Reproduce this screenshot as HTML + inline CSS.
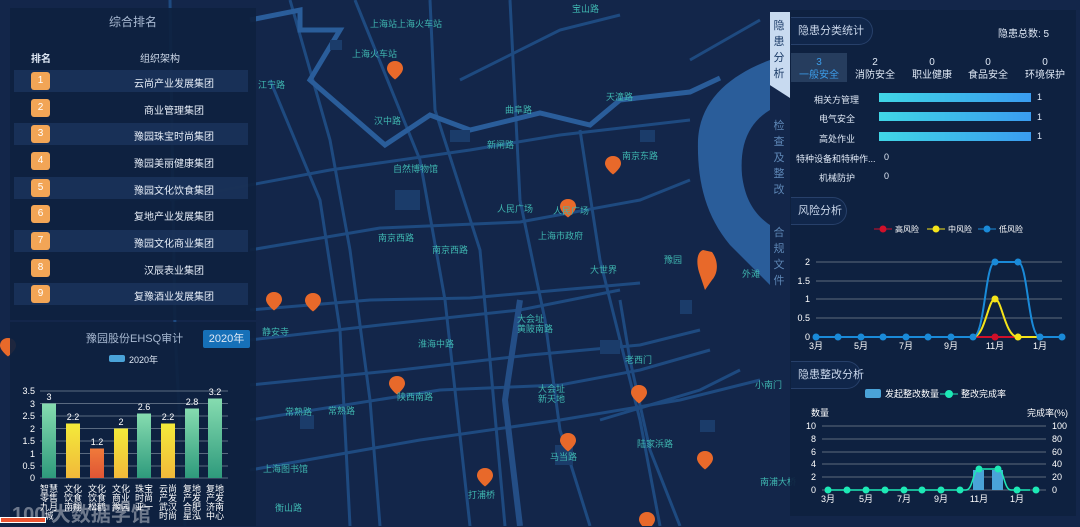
<!DOCTYPE html>
<html><head><meta charset="utf-8"><style>
*{margin:0;padding:0;box-sizing:border-box}
body{width:1080px;height:526px;overflow:hidden;background:#13264a;font-family:"Liberation Sans","Noto Sans CJK SC",sans-serif;color:#dfe8f5;position:relative}
.abs{position:absolute}
.ml{position:absolute;font-size:9px;color:#3fb6b0;white-space:nowrap}
.panel{position:absolute;background:rgba(14,33,64,0.93)}
.row{position:absolute;left:14px;width:234px;height:22px;font-size:10px}
.row.o{background:rgba(28,52,92,0.8)}
.bd{position:absolute;left:17px;top:2px;width:19px;height:18px;background:#f2a556;border-radius:3px;color:#fff;text-align:center;line-height:18px;font-size:10px}
.rt{position:absolute;left:90px;width:140px;text-align:center;top:5px;color:#e6edf7}
.tab{position:absolute;left:768px;width:22px;font-size:11px;text-align:center;line-height:16px;color:#5d86b5}
.hd{position:absolute;height:28px;border:1px solid #27406a;border-left:none;border-radius:0 14px 14px 0;font-size:11px;line-height:26px;padding-left:7px;color:#c9d6ea;background:#10264a;white-space:nowrap}
</style></head><body>
<svg class="abs" style="left:0;top:0" width="1080" height="526">
<g fill="none" stroke="#1e4a80" stroke-width="3">
<path d="M170 0 L175 330 L185 526"/>
<path d="M355 0 L420 160 L445 300 L470 526"/>
<path d="M430 0 L435 110 L480 250 L490 360 L505 526"/>
<path d="M170 200 L330 170 L470 150 L560 135 L690 120"/>
<path d="M250 250 L380 228 L520 222 L640 200 L690 180"/>
<path d="M250 310 L370 300 L470 298 L560 290 L640 283"/>
<path d="M250 340 L380 325 L520 310 L620 290"/>
<path d="M250 385 L400 370 L530 355 L640 345 L700 330"/>
<path d="M250 420 L440 390 L560 385 L640 370 L710 350"/>
<path d="M250 470 L420 440 L560 420 L680 400 L760 380"/>
<path d="M290 0 L330 140 L350 250 L370 400 L380 526"/>
<path d="M510 0 L520 200 L545 320 L560 430 L590 526"/>
<path d="M580 130 L600 260 L640 420 L660 526"/>
<path d="M270 80 L320 200 L340 330 L350 526"/>
<path d="M620 300 L630 360 L650 450 L680 526"/>
<path d="M460 80 L560 30 L620 15"/>
<path d="M690 60 L760 20"/>
<path d="M600 420 L700 390 L740 370"/>
</g>
<path d="M250 20 L300 10 L300 30 L340 30 L310 80 L385 145 L430 115 L470 130 L540 113 L590 125 L620 100 L690 92 L720 78" fill="none" stroke="#2a5d9a" stroke-width="5"/>
<path d="M520 300 L505 400 L520 526" fill="none" stroke="#244e86" stroke-width="6"/>
<path d="M770 60 C730 75 700 100 698 140 C697 180 705 215 730 245 L770 285 Z" fill="#2a5d9a"/>
<path d="M770 110 C745 125 740 150 742 175 C745 200 755 215 770 225 Z" fill="#13264a"/>
<g fill="#1b3c6a">
<rect x="330" y="40" width="12" height="10"/><rect x="450" y="130" width="20" height="12"/><rect x="395" y="190" width="25" height="20"/><rect x="640" y="130" width="15" height="12"/><rect x="680" y="300" width="12" height="14"/><rect x="600" y="340" width="20" height="14"/><rect x="700" y="420" width="15" height="12"/><rect x="555" y="445" width="18" height="20"/><rect x="300" y="415" width="14" height="14"/>
</g>
<g fill="#e8692a">
<path transform="translate(395,61)" d="M0 0c-5 0-8 3.5-8 7.5c0 5 8 11 8 11s8-6 8-11c0-4-3-7.5-8-7.5z"/>
<path transform="translate(613,156)" d="M0 0c-5 0-8 3.5-8 7.5c0 5 8 11 8 11s8-6 8-11c0-4-3-7.5-8-7.5z"/>
<path transform="translate(568,199)" d="M0 0c-5 0-8 3.5-8 7.5c0 5 8 11 8 11s8-6 8-11c0-4-3-7.5-8-7.5z"/>
<path transform="translate(274,292)" d="M0 0c-5 0-8 3.5-8 7.5c0 5 8 11 8 11s8-6 8-11c0-4-3-7.5-8-7.5z"/>
<path transform="translate(313,293)" d="M0 0c-5 0-8 3.5-8 7.5c0 5 8 11 8 11s8-6 8-11c0-4-3-7.5-8-7.5z"/>
<path transform="translate(397,376)" d="M0 0c-5 0-8 3.5-8 7.5c0 5 8 11 8 11s8-6 8-11c0-4-3-7.5-8-7.5z"/>
<path transform="translate(639,385)" d="M0 0c-5 0-8 3.5-8 7.5c0 5 8 11 8 11s8-6 8-11c0-4-3-7.5-8-7.5z"/>
<path transform="translate(568,433)" d="M0 0c-5 0-8 3.5-8 7.5c0 5 8 11 8 11s8-6 8-11c0-4-3-7.5-8-7.5z"/>
<path transform="translate(705,451)" d="M0 0c-5 0-8 3.5-8 7.5c0 5 8 11 8 11s8-6 8-11c0-4-3-7.5-8-7.5z"/>
<path transform="translate(485,468)" d="M0 0c-5 0-8 3.5-8 7.5c0 5 8 11 8 11s8-6 8-11c0-4-3-7.5-8-7.5z"/>
<path transform="translate(647,512)" d="M0 0c-5 0-8 3.5-8 7.5c0 5 8 11 8 11s8-6 8-11c0-4-3-7.5-8-7.5z"/>
<path transform="translate(8,338)" d="M0 0c-5 0-8 3.5-8 7.5c0 5 8 11 8 11s8-6 8-11c0-4-3-7.5-8-7.5z"/>
<path d="M703 250 C697 252 696 262 699 272 L705 290 L712 280 C719 272 718 260 712 252Z"/>
</g>
</svg>
<div class="ml" style="left:370px;top:17px">上海站上海火车站</div>
<div class="ml" style="left:352px;top:47px">上海火车站</div>
<div class="ml" style="left:374px;top:114px">汉中路</div>
<div class="ml" style="left:505px;top:103px">曲阜路</div>
<div class="ml" style="left:606px;top:90px">天潼路</div>
<div class="ml" style="left:487px;top:138px">新闸路</div>
<div class="ml" style="left:393px;top:162px">自然博物馆</div>
<div class="ml" style="left:622px;top:149px">南京东路</div>
<div class="ml" style="left:497px;top:202px">人民广场</div>
<div class="ml" style="left:553px;top:204px">人民广场</div>
<div class="ml" style="left:538px;top:229px">上海市政府</div>
<div class="ml" style="left:378px;top:231px">南京西路</div>
<div class="ml" style="left:432px;top:243px">南京西路</div>
<div class="ml" style="left:590px;top:263px">大世界</div>
<div class="ml" style="left:664px;top:253px">豫园</div>
<div class="ml" style="left:742px;top:267px">外滩</div>
<div class="ml" style="left:262px;top:325px">静安寺</div>
<div class="ml" style="left:418px;top:337px">淮海中路</div>
<div class="ml" style="left:517px;top:314px;line-height:10px">大会址<br>黄陂南路</div>
<div class="ml" style="left:625px;top:353px">老西门</div>
<div class="ml" style="left:397px;top:390px">陕西南路</div>
<div class="ml" style="left:538px;top:384px;line-height:10px">大会址<br>新天地</div>
<div class="ml" style="left:285px;top:405px">常熟路</div>
<div class="ml" style="left:328px;top:404px">常熟路</div>
<div class="ml" style="left:637px;top:437px">陆家浜路</div>
<div class="ml" style="left:550px;top:450px">马当路</div>
<div class="ml" style="left:263px;top:462px">上海图书馆</div>
<div class="ml" style="left:468px;top:488px">打浦桥</div>
<div class="ml" style="left:275px;top:501px">衡山路</div>
<div class="ml" style="left:572px;top:2px">宝山路</div>
<div class="ml" style="left:258px;top:78px">江宁路</div>
<div class="ml" style="left:755px;top:378px">小南门</div>
<div class="ml" style="left:760px;top:475px">南浦大桥</div>

<div class="panel" style="left:10px;top:8px;width:246px;height:312px"></div>
<div class="abs" style="left:10px;top:13px;width:246px;text-align:center;font-size:12px;color:#a9bad2">综合排名</div>
<div class="abs" style="left:31px;top:50px;font-size:10px;font-weight:bold">排名</div>
<div class="abs" style="left:140px;top:50px;font-size:10px;color:#d0dbeb">组织架构</div>
<div class="row o" style="top:70px"><div class="bd">1</div><div class="rt">云尚产业发展集团</div></div>
<div class="row" style="top:97px"><div class="bd">2</div><div class="rt">商业管理集团</div></div>
<div class="row o" style="top:123px"><div class="bd">3</div><div class="rt">豫园珠宝时尚集团</div></div>
<div class="row" style="top:150px"><div class="bd">4</div><div class="rt">豫园美丽健康集团</div></div>
<div class="row o" style="top:177px"><div class="bd">5</div><div class="rt">豫园文化饮食集团</div></div>
<div class="row" style="top:203px"><div class="bd">6</div><div class="rt">复地产业发展集团</div></div>
<div class="row o" style="top:230px"><div class="bd">7</div><div class="rt">豫园文化商业集团</div></div>
<div class="row" style="top:257px"><div class="bd">8</div><div class="rt">汉辰表业集团</div></div>
<div class="row o" style="top:283px"><div class="bd">9</div><div class="rt">复豫酒业发展集团</div></div>

<div class="panel" style="left:10px;top:322px;width:246px;height:204px"></div>
<div class="abs" style="left:86px;top:330px;font-size:11px;color:#a9bad2">豫园股份EHSQ审计</div>
<div class="abs" style="left:203px;top:330px;width:47px;height:18px;background:#1670b8;border-radius:2px;font-size:11px;text-align:center;line-height:18px">2020年</div>
<div class="abs" style="left:109px;top:355px;width:16px;height:7px;background:#4aa3d8;border-radius:2px"></div>
<div class="abs" style="left:129px;top:353px;font-size:9px">2020年</div>
<svg class="abs" style="left:0;top:380px" width="256" height="146">
<defs>
<linearGradient id="g" x1="0" y1="0" x2="0" y2="1"><stop offset="0" stop-color="#86dcb0"/><stop offset="1" stop-color="#2e9a7c"/></linearGradient>
<linearGradient id="y" x1="0" y1="0" x2="0" y2="1"><stop offset="0" stop-color="#f3ea3a"/><stop offset="1" stop-color="#f2b93a"/></linearGradient>
<linearGradient id="r" x1="0" y1="0" x2="0" y2="1"><stop offset="0" stop-color="#f07a3a"/><stop offset="1" stop-color="#e05535"/></linearGradient>
</defs>
<g stroke="#5a6a80" stroke-width="1">
<line x1="40" y1="11" x2="228" y2="11"/><line x1="40" y1="23.5" x2="228" y2="23.5"/><line x1="40" y1="36" x2="228" y2="36"/><line x1="40" y1="48.5" x2="228" y2="48.5"/><line x1="40" y1="61" x2="228" y2="61"/><line x1="40" y1="73.5" x2="228" y2="73.5"/><line x1="40" y1="86" x2="228" y2="86"/><line x1="40" y1="98" x2="228" y2="98"/>
</g>
<g font-size="9" fill="#fff" text-anchor="end">
<text x="35" y="14">3.5</text><text x="35" y="27">3</text><text x="35" y="39">2.5</text><text x="35" y="52">2</text><text x="35" y="64">1.5</text><text x="35" y="77">1</text><text x="35" y="89">0.5</text><text x="35" y="101">0</text>
</g>
<rect x="42" y="23.5" width="14" height="74.5" fill="url(#g)"/>
<rect x="66" y="43.5" width="14" height="54.5" fill="url(#y)"/>
<rect x="90" y="68.5" width="14" height="29.5" fill="url(#r)"/>
<rect x="114" y="48.5" width="14" height="49.5" fill="url(#y)"/>
<rect x="137" y="33.5" width="14" height="64.5" fill="url(#g)"/>
<rect x="161" y="43.5" width="14" height="54.5" fill="url(#y)"/>
<rect x="185" y="28.5" width="14" height="69.5" fill="url(#g)"/>
<rect x="208" y="18.5" width="14" height="79.5" fill="url(#g)"/>
<g font-size="9" fill="#fff" text-anchor="middle">
<text x="49" y="20">3</text><text x="73" y="40">2.2</text><text x="97" y="65">1.2</text><text x="121" y="45">2</text><text x="144" y="30">2.6</text><text x="168" y="40">2.2</text><text x="192" y="25">2.8</text><text x="215" y="15">3.2</text>
</g>
<g font-size="9" fill="#fff" text-anchor="middle">
<text x="49" y="112">智慧</text><text x="49" y="121">零售</text><text x="49" y="130">九月</text><text x="49" y="139">城</text>
<text x="73" y="112">文化</text><text x="73" y="121">饮食</text><text x="73" y="130">南翔</text>
<text x="97" y="112">文化</text><text x="97" y="121">饮食</text><text x="97" y="130">松鹤</text>
<text x="121" y="112">文化</text><text x="121" y="121">商业</text><text x="121" y="130">豫园</text>
<text x="144" y="112">珠宝</text><text x="144" y="121">时尚</text><text x="144" y="130">亚一</text>
<text x="168" y="112">云尚</text><text x="168" y="121">产发</text><text x="168" y="130">武汉</text><text x="168" y="139">时尚</text>
<text x="192" y="112">复地</text><text x="192" y="121">产发</text><text x="192" y="130">合肥</text><text x="192" y="139">星泓</text>
<text x="215" y="112">复地</text><text x="215" y="121">产发</text><text x="215" y="130">济南</text><text x="215" y="139">中心</text>
</g>
</svg>
<div class="abs" style="left:12px;top:498px;font-size:20px;color:rgba(255,255,255,0.4);font-weight:bold">100 大数据学馆</div>
<div class="abs" style="left:0;top:517px;width:46px;height:6px;background:#e53;border:1px solid #fff"></div>

<div class="panel" style="left:790px;top:10px;width:286px;height:506px"></div>
<div class="abs" style="left:770px;top:12px;width:20px;height:86px;background:#c8daf0;clip-path:polygon(0 0,100% 0,100% 100%,0 85%)"></div>
<div class="tab" style="top:18px;color:#1a3a66">隐<br>患<br>分<br>析</div>
<div class="tab" style="top:118px">检<br>查<br>及<br>整<br>改</div>
<div class="tab" style="top:225px">合<br>规<br>文<br>件</div>
<div class="hd" style="left:791px;top:17px;width:82px">隐患分类统计</div>
<div class="abs" style="left:998px;top:25px;font-size:10px">隐患总数:  5</div>
<div class="abs" style="left:791px;top:53px;width:56px;height:29px;background:#263d5e"></div>
<div class="abs" style="left:791px;top:56px;width:56px;text-align:center;font-size:10px;line-height:13px;color:#3c9ce8">3<br>一般安全</div>
<div class="abs" style="left:847px;top:56px;width:56px;text-align:center;font-size:10px;line-height:13px">2<br>消防安全</div>
<div class="abs" style="left:904px;top:56px;width:56px;text-align:center;font-size:10px;line-height:13px">0<br>职业健康</div>
<div class="abs" style="left:960px;top:56px;width:56px;text-align:center;font-size:10px;line-height:13px">0<br>食品安全</div>
<div class="abs" style="left:1016px;top:56px;width:58px;text-align:center;font-size:10px;line-height:13px">0<br>环境保护</div>
<div class="abs" style="left:814px;top:93px;font-size:9px">相关方管理</div>
<div class="abs" style="left:819px;top:112px;font-size:9px">电气安全</div>
<div class="abs" style="left:819px;top:132px;font-size:9px">高处作业</div>
<div class="abs" style="left:796px;top:152px;font-size:9px">特种设备和特种作...</div>
<div class="abs" style="left:819px;top:171px;font-size:9px">机械防护</div>
<div class="abs" style="left:879px;top:93px;width:152px;height:9px;background:linear-gradient(90deg,#40d6e6,#3a9cf0)"></div>
<div class="abs" style="left:879px;top:112px;width:152px;height:9px;background:linear-gradient(90deg,#40d6e6,#3a9cf0)"></div>
<div class="abs" style="left:879px;top:132px;width:152px;height:9px;background:linear-gradient(90deg,#40d6e6,#3a9cf0)"></div>
<div class="abs" style="left:1037px;top:92px;font-size:9px">1</div>
<div class="abs" style="left:1037px;top:112px;font-size:9px">1</div>
<div class="abs" style="left:1037px;top:131px;font-size:9px">1</div>
<div class="abs" style="left:884px;top:152px;font-size:9px">0</div>
<div class="abs" style="left:884px;top:171px;font-size:9px">0</div>
<div class="hd" style="left:791px;top:197px;width:56px">风险分析</div>
<svg class="abs" style="left:790px;top:220px" width="290" height="300">
<g font-size="8" fill="#fff">
<line x1="84" y1="9" x2="102" y2="9" stroke="#d0102a"/><circle cx="93" cy="9" r="3.5" fill="#d0102a"/><text x="105" y="12">高风险</text>
<line x1="137" y1="9" x2="155" y2="9" stroke="#f5e41a"/><circle cx="146" cy="9" r="3.5" fill="#f5e41a"/><text x="158" y="12">中风险</text>
<line x1="188" y1="9" x2="206" y2="9" stroke="#1a8ad8"/><circle cx="197" cy="9" r="3.5" fill="#1a8ad8"/><text x="209" y="12">低风险</text>
</g>
<g stroke="#5e6a7c"><line x1="26" y1="42" x2="272" y2="42"/><line x1="26" y1="61" x2="272" y2="61"/><line x1="26" y1="79" x2="272" y2="79"/><line x1="26" y1="98" x2="272" y2="98"/><line x1="26" y1="117" x2="272" y2="117"/></g>
<g font-size="9" fill="#fff" text-anchor="end"><text x="20" y="45">2</text><text x="20" y="64">1.5</text><text x="20" y="82">1</text><text x="20" y="101">0.5</text><text x="20" y="120">0</text></g>
<path d="M183 117 L228 117" stroke="#d0102a" stroke-width="2"/>
<path d="M183 117 C195 117 198 79 205 79 C212 79 215 117 228 117 L250 117" stroke="#f5e41a" stroke-width="2" fill="none"/>
<path d="M26 117 L183 117 C195 117 195 42 205 42 L228 42 C238 42 238 117 250 117 L272 117" stroke="#1a8ad8" stroke-width="2" fill="none"/>
<g fill="#1a8ad8"><circle cx="26" cy="117" r="3.5"/><circle cx="48" cy="117" r="3.5"/><circle cx="71" cy="117" r="3.5"/><circle cx="93" cy="117" r="3.5"/><circle cx="116" cy="117" r="3.5"/><circle cx="138" cy="117" r="3.5"/><circle cx="161" cy="117" r="3.5"/><circle cx="183" cy="117" r="3.5"/><circle cx="205" cy="42" r="3.5"/><circle cx="228" cy="42" r="3.5"/><circle cx="250" cy="117" r="3.5"/><circle cx="272" cy="117" r="3.5"/></g>
<circle cx="205" cy="117" r="3.5" fill="#d0102a"/><circle cx="205" cy="79" r="3.5" fill="#f5e41a"/><circle cx="228" cy="117" r="3.5" fill="#f5e41a"/>
<g font-size="9" fill="#fff" text-anchor="middle"><text x="26" y="129">3月</text><text x="71" y="129">5月</text><text x="116" y="129">7月</text><text x="161" y="129">9月</text><text x="205" y="129">11月</text><text x="250" y="129">1月</text></g>
</svg>
<div class="hd" style="left:791px;top:361px;width:70px">隐患整改分析</div>
<svg class="abs" style="left:790px;top:385px" width="290" height="135">
<rect x="75" y="4" width="16" height="9" rx="2" fill="#4aa3d8"/><text x="95" y="12" font-size="9" fill="#fff">发起整改数量</text>
<line x1="150" y1="9" x2="168" y2="9" stroke="#1de9b6"/><circle cx="159" cy="9" r="4" fill="#1de9b6"/><text x="171" y="12" font-size="9" fill="#fff">整改完成率</text>
<text x="21" y="31" font-size="9" fill="#fff">数量</text><text x="237" y="31" font-size="9" fill="#fff">完成率(%)</text>
<g stroke="#5e6a7c"><line x1="32" y1="41" x2="256" y2="41"/><line x1="32" y1="54" x2="256" y2="54"/><line x1="32" y1="67" x2="256" y2="67"/><line x1="32" y1="79" x2="256" y2="79"/><line x1="32" y1="92" x2="256" y2="92"/><line x1="32" y1="105" x2="256" y2="105"/></g>
<g font-size="9" fill="#fff" text-anchor="end"><text x="26" y="44">10</text><text x="26" y="57">8</text><text x="26" y="70">6</text><text x="26" y="82">4</text><text x="26" y="95">2</text><text x="26" y="108">0</text></g>
<g font-size="9" fill="#fff"><text x="262" y="44">100</text><text x="262" y="57">80</text><text x="262" y="70">60</text><text x="262" y="82">40</text><text x="262" y="95">20</text><text x="262" y="108">0</text></g>
<rect x="183" y="85" width="11" height="20" fill="#4aa3d8"/><rect x="202" y="85" width="11" height="20" fill="#4aa3d8"/>
<path d="M38 105 L176 105 C183 105 183 84 189 84 L208 84 C214 84 214 105 221 105 L240 105" stroke="#1de9b6" stroke-width="1.5" fill="none"/>
<g fill="#1de9b6"><circle cx="38" cy="105" r="3.5"/><circle cx="57" cy="105" r="3.5"/><circle cx="76" cy="105" r="3.5"/><circle cx="95" cy="105" r="3.5"/><circle cx="114" cy="105" r="3.5"/><circle cx="132" cy="105" r="3.5"/><circle cx="151" cy="105" r="3.5"/><circle cx="170" cy="105" r="3.5"/><circle cx="189" cy="84" r="3.5"/><circle cx="208" cy="84" r="3.5"/><circle cx="227" cy="105" r="3.5"/><circle cx="246" cy="105" r="3.5"/></g>
<g font-size="9" fill="#fff" text-anchor="middle"><text x="38" y="117">3月</text><text x="76" y="117">5月</text><text x="114" y="117">7月</text><text x="151" y="117">9月</text><text x="189" y="117">11月</text><text x="227" y="117">1月</text></g>
</svg>
</body></html>
